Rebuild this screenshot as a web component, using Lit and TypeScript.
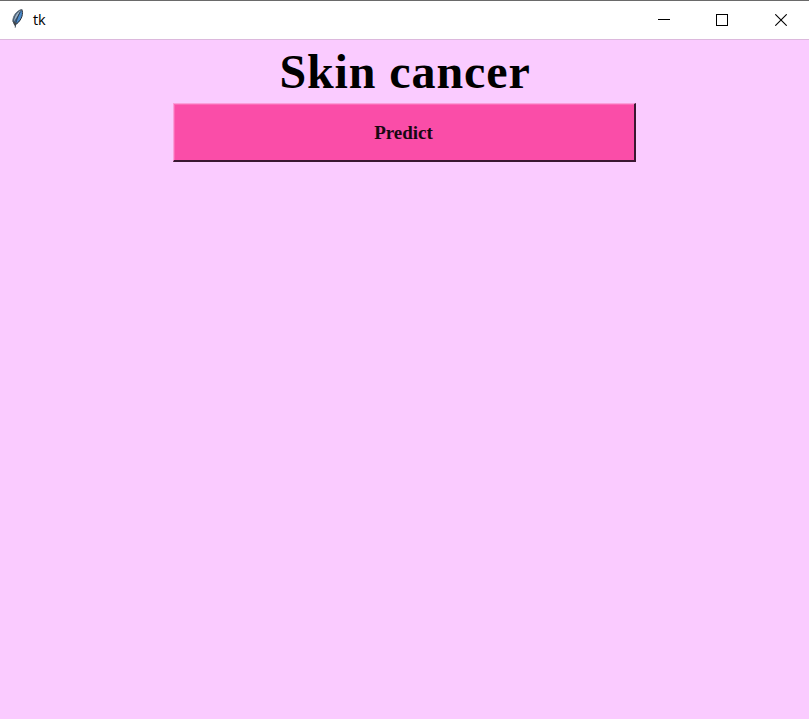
import { LitElement, html, css } from "lit";
import { customElement } from "lit/decorators.js";

@customElement("window-bar")
class WindowBar extends LitElement {
  static styles = css`
    :host {
      display: flex;
      align-items: center;
      box-sizing: border-box;
      height: 40px;
      background: #fff;
      border-top: 1px solid #6a6a6a;
      border-bottom: 1px solid #dcb8dd;
    }
    .feather { flex: none; margin: 0 0 2px 10px; width: 16px; height: 22px; }
    .title {
      flex: 1;
      margin: 0 0 1px 7px;
      font: 14.5px/20px "Open Sans", "Noto Sans", sans-serif;
      letter-spacing: -0.2px;
      color: #000;
    }
    .controls { display: flex; align-self: stretch; width: 174px; }
    .control {
      display: flex;
      width: 58px;
      align-items: center;
      justify-content: center;
      flex: none;
    }
    .control:last-child { width: 60px; }
    .control svg { width: 12px; height: 12px; display: block; }
  `;

  render() {
    return html`
      <svg class="feather" viewBox="0 0 16 22">
        <path d="M11.6 1.2C7 2.3 3 7.3 2.6 12.6L4.2 17.2C9 15.9 14 8.2 11.6 1.2Z" fill="#3f5874" />
        <path d="M10.6 2.6C7.4 4.2 4.6 8.2 3.8 13.8L8.2 7Z" fill="#9fb2c2" />
        <path d="M11.6 3C12.9 8 10.3 13.3 6 16.2L5.2 14.6C7.4 11 9 7 10.6 3Z" fill="#4a8bcd" />
        <path d="M11.8 1.3C13.7 5.4 12 11.6 6.6 15.9" fill="none" stroke="#1c2430" stroke-width=".9" />
        <path d="M11.6 1.5C7 2.7 2.7 7.5 2.7 13.8" fill="none" stroke="#6b7378" stroke-width=".8" />
        <path d="M10.4 3.8C8 8 6.1 12 5.2 19.6" fill="none" stroke="#2a3a4c" stroke-width=".9" />
        <path d="M2.6 13.2L4.8 18L7.2 15.2Z" fill="#45484b" />
      </svg>
      <span class="title">tk</span>
      <div class="controls">
        <div class="control">
          <svg viewBox="0 0 12 12" shape-rendering="crispEdges"><path d="M0 5.5H12" stroke="#000" /></svg>
        </div>
        <div class="control">
          <svg viewBox="0 0 12 12" shape-rendering="crispEdges"><rect x=".5" y=".5" width="11" height="11" fill="none" stroke="#000" /></svg>
        </div>
        <div class="control">
          <svg viewBox="0 0 12 12"><path d="M.3 .3L11.7 11.7M11.7 .3L.3 11.7" stroke="#000" stroke-width="1.1" /></svg>
        </div>
      </div>
    `;
  }
}

@customElement("app-root")
class AppRoot extends LitElement {
  static styles = css`
    :host {
      display: flex;
      flex-direction: column;
      height: 719px;
      background: #facbff;
      font-family: "Liberation Serif", "Times New Roman", serif;
      color: #000;
    }
    .content { display: flex; flex-direction: column; align-items: center; }
    .heading {
      margin: 2px 0 0;
      padding-left: 1px;
      font-size: 48px;
      line-height: 59px;
      font-weight: 700;
      letter-spacing: 0.9px;
      white-space: nowrap;
    }
    .predict {
      box-sizing: border-box;
      width: 463px;
      height: 59px;
      margin: 2px 0 0;
      padding: 1px 1px 0 0;
      border: solid;
      border-width: 1px 2px 2px 1px;
      border-color: #fb9edb #3a1731 #3a1731 #fb9edb;
      box-shadow: inset 1px 1px #fb6ab8;
      background: #fa4da8;
      font: 700 19px/22px "Liberation Serif", "Times New Roman", serif;
      color: #180812;
    }
  `;

  render() {
    return html`
      <window-bar></window-bar>
      <main class="content">
        <h1 class="heading">Skin cancer</h1>
        <button class="predict">Predict</button>
      </main>
    `;
  }
}
